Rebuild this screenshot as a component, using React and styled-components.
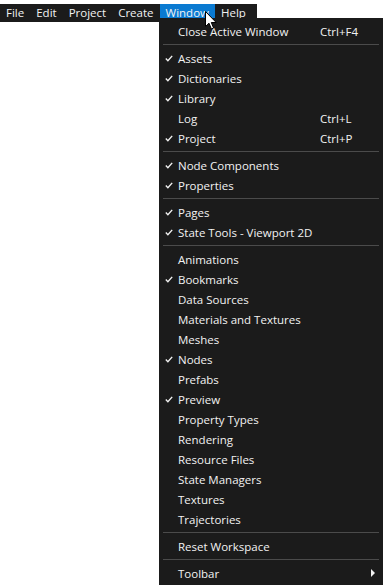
import React from 'react';
import styled, { createGlobalStyle } from 'styled-components';

const GlobalStyle = createGlobalStyle`
  html, body {
    margin: 0;
    background: #ffffff;
    font-family: "Open Sans", "Noto Sans", sans-serif;
  }
`;

const topMenus = ['File', 'Edit', 'Project', 'Create', 'Window', 'Help'];

// null = separator
const windowItems = [
  { label: 'Close Active Window', shortcut: 'Ctrl+F4' },
  null,
  { label: 'Assets', checked: true },
  { label: 'Dictionaries', checked: true },
  { label: 'Library', checked: true },
  { label: 'Log', shortcut: 'Ctrl+L' },
  { label: 'Project', checked: true, shortcut: 'Ctrl+P' },
  null,
  { label: 'Node Components', checked: true },
  { label: 'Properties', checked: true },
  null,
  { label: 'Pages', checked: true },
  { label: 'State Tools - Viewport 2D', checked: true },
  null,
  { label: 'Animations' },
  { label: 'Bookmarks', checked: true },
  { label: 'Data Sources' },
  { label: 'Materials and Textures' },
  { label: 'Meshes' },
  { label: 'Nodes', checked: true },
  { label: 'Prefabs' },
  { label: 'Preview', checked: true },
  { label: 'Property Types' },
  { label: 'Rendering' },
  { label: 'Resource Files' },
  { label: 'State Managers' },
  { label: 'Textures' },
  { label: 'Trajectories' },
  null,
  { label: 'Reset Workspace' },
  null,
  { label: 'Toolbar', submenu: true },
];

function CheckIcon() {
  return (
    <svg width="8" height="7" viewBox="0 0 8 7">
      <path d="M0.8 3.6 L2.9 5.8 L7.2 0.9" fill="none" stroke="#f0f0f0" strokeWidth="1.4" />
    </svg>
  );
}

function Cursor() {
  return (
    <svg width="13" height="20" viewBox="0 0 13 20">
      <path
        d="M0.5 0.5 L0.5 15.5 L4 12.2 L6.4 18 L8.6 17.1 L6.3 11.5 L11.2 11.5 Z"
        fill="#ffffff"
        stroke="#000000"
        strokeWidth="1"
        strokeLinejoin="round"
      />
    </svg>
  );
}

export default function App() {
  return (
    <Page>
      <GlobalStyle />
      <MenuBar>
        {topMenus.map((m) => (
          <TopItem key={m} $active={m === 'Window'}>{m}</TopItem>
        ))}
      </MenuBar>
      <CursorSpot>
        <Cursor />
      </CursorSpot>
      <Dropdown>
        {windowItems.map((item, i) =>
          item === null ? (
            <Separator key={i} />
          ) : (
            <Row key={i}>
              <CheckCell>{item.checked && <CheckIcon />}</CheckCell>
              <Label>{item.label}</Label>
              <Shortcut>{item.shortcut}</Shortcut>
              <Arrow $show={item.submenu} />
            </Row>
          )
        )}
      </Dropdown>
    </Page>
  );
}

const Page = styled.div`
  position: relative;
  width: 383px;
  height: 585px;
  overflow: hidden;
  background: #ffffff;
`;

const MenuBar = styled.div`
  display: inline-flex;
  height: 18px;
  background: #1b1b1b;
  padding-right: 5px;
`;

const TopItem = styled.div`
  display: flex;
  align-items: center;
  padding: 0 6px;
  height: 18px;
  font-size: 11.5px;
  color: #f2f2f2;
  background: ${(p) => (p.$active ? '#0a7ad1' : 'transparent')};
`;

const CursorSpot = styled.div`
  position: absolute;
  left: 205px;
  top: 11px;
  z-index: 5;
  line-height: 0;
`;

const Dropdown = styled.div`
  position: absolute;
  left: 159px;
  top: 18px;
  width: 224px;
  bottom: 0;
  padding-top: 3px;
  box-sizing: border-box;
  background: #1b1b1b;
`;

const Row = styled.div`
  display: grid;
  grid-template-columns: 19px 142px 1fr 12px;
  align-items: center;
  height: 20px;
  font-size: 11.5px;
  color: #f2f2f2;
`;

const CheckCell = styled.div`
  display: flex;
  justify-content: flex-end;
  padding-right: 5px;
  line-height: 0;
`;

const Label = styled.span`
  white-space: nowrap;
`;

const Shortcut = styled.span`
  white-space: nowrap;
`;

const Arrow = styled.span`
  width: 0;
  height: 0;
  border-top: 4px solid transparent;
  border-bottom: 4px solid transparent;
  border-left: 4px solid ${(p) => (p.$show ? '#f2f2f2' : 'transparent')};
`;

const Separator = styled.div`
  height: 7px;
  margin: 0 4px;
  display: flex;
  align-items: center;
  &::after {
    content: '';
    flex: 1;
    height: 1px;
    background: #4b4b4b;
  }
`;
